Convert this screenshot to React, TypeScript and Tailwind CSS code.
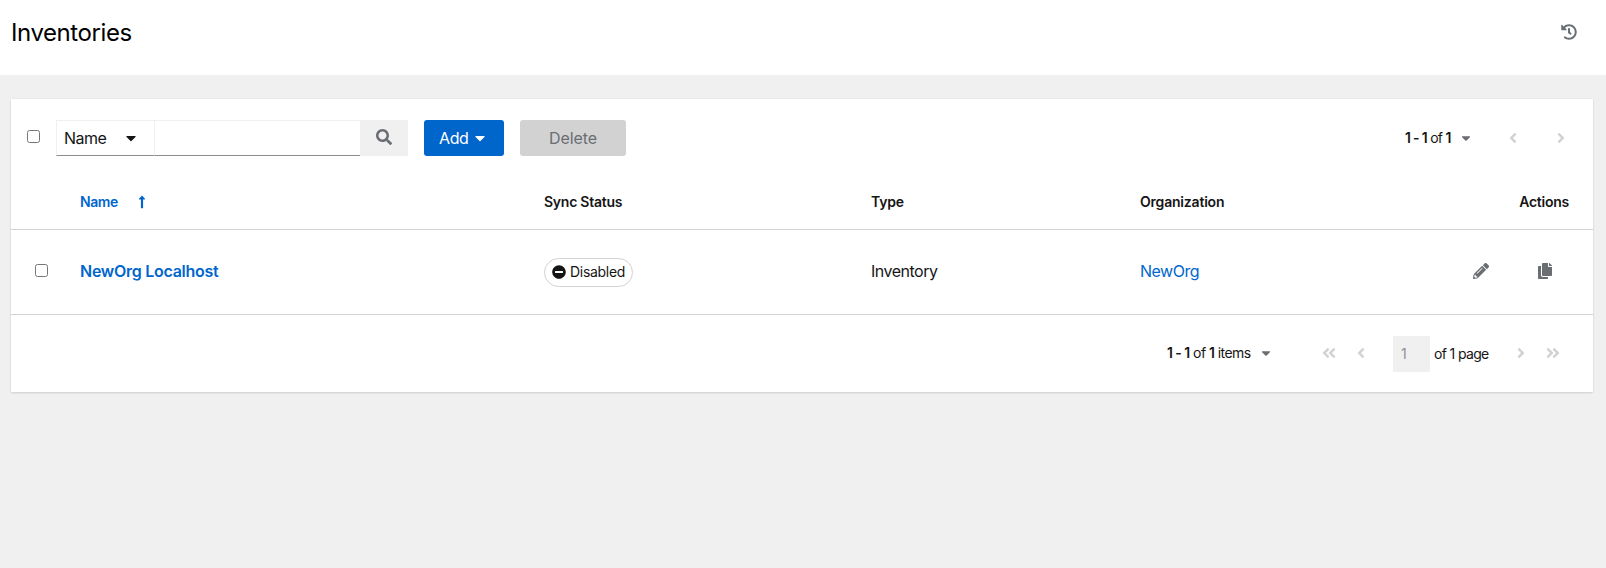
import type { ReactNode } from "react";
import {
  FaAngleDoubleLeft,
  FaAngleDoubleRight,
  FaAngleLeft,
  FaAngleRight,
  FaCaretDown,
  FaCopy,
  FaHistory,
  FaLongArrowAltUp,
  FaMinusCircle,
  FaPencilAlt,
  FaSearch,
} from "react-icons/fa";

function Checkbox({ label }: { label: string }) {
  return (
    <input
      type="checkbox"
      aria-label={label}
      className="block size-[13px] shrink-0 appearance-none rounded-[2.5px] border border-[#767676] bg-white"
    />
  );
}

function IconButton({ label, className, children }: { label: string; className: string; children: ReactNode }) {
  return (
    <button type="button" aria-label={label} className={`flex shrink-0 items-center justify-center ${className}`}>
      {children}
    </button>
  );
}

function Toolbar() {
  return (
    <div className="flex h-[77px] items-center pt-[1px] pl-4">
      <div className="-mt-[3px] w-[29px]">
        <Checkbox label="Select all" />
      </div>
      <div className="flex h-9">
        <button
          type="button"
          className="flex w-[99px] items-center border border-[#f0f0f0] border-b-[#8a8d90] pl-[7px] text-base tracking-[-0.5px]"
        >
          <span className="w-[59px] pb-px text-left">Name</span>
          <FaCaretDown size={16} />
        </button>
        <input
          type="text"
          aria-label="Search text input"
          className="w-[205px] border-t border-b border-[#f0f0f0] border-b-[#8a8d90] bg-white"
        />
        <IconButton label="Search" className="w-12 bg-[#f0f0f0] text-[#6a6e73]">
          <FaSearch size={16} className="-mt-[2px]" />
        </IconButton>
      </div>
      <button
        type="button"
        className="ml-4 flex h-9 w-20 items-center rounded-[3px] bg-[#0066cc] pl-[15px] text-base tracking-[-0.4px] text-white"
      >
        <span className="w-[33px] pb-px text-left">Add</span>
        <FaCaretDown size={16} />
      </button>
      <button
        type="button"
        disabled
        className="ml-4 h-9 w-[106px] rounded-[3px] bg-[#d2d2d2] pb-px text-base tracking-[-0.1px] text-[#6a6e73]"
      >
        Delete
      </button>
      <div className="ml-auto flex items-center pr-[17px] text-sm">
        <span className="w-[54px] whitespace-nowrap pb-px tracking-[-0.7px]">
          <b className="font-semibold">1 - 1</b> of <b className="font-semibold">1</b>
        </span>
        <FaCaretDown size={14} className="-mt-px text-[#6a6e73]" />
        <IconButton label="Previous page" className="ml-[25px] w-[30px] pb-px text-[#d2d2d2]">
          <FaAngleLeft size={16} />
        </IconButton>
        <IconButton label="Next page" className="ml-[18px] w-[30px] pb-px text-[#d2d2d2]">
          <FaAngleRight size={16} />
        </IconButton>
      </div>
    </div>
  );
}

function InventoryTable() {
  return (
    <table className="w-full table-fixed border-collapse text-left">
      <colgroup>
        <col className="w-[69px]" />
        <col className="w-[464px]" />
        <col className="w-[327px]" />
        <col className="w-[269px]" />
        <col className="w-[280px]" />
        <col />
      </colgroup>
      <thead>
        <tr className="h-[53px] border-b border-[#d2d2d2] text-sm">
          <th />
          <th className="font-semibold text-[#0066cc]">
            <span className="flex items-center pb-px">
              <span className="w-[55px] tracking-[-0.4px]">Name</span>
              <FaLongArrowAltUp size={14} />
            </span>
          </th>
          <th className="pb-px font-semibold tracking-[-0.25px]">Sync Status</th>
          <th className="pb-px font-semibold tracking-[-0.2px]">Type</th>
          <th className="pb-px font-semibold tracking-[-0.2px]">Organization</th>
          <th className="pr-6 pb-px text-right font-semibold tracking-[-0.25px]">Actions</th>
        </tr>
      </thead>
      <tbody>
        <tr className="h-[85px] border-b border-[#d2d2d2] text-base">
          <td className="pb-[2px] pl-6">
            <Checkbox label="Select row" />
          </td>
          <td className="pb-[2px] font-semibold tracking-[-0.27px] text-[#0066cc]">
            <a href="#inventory">NewOrg Localhost</a>
          </td>
          <td className="pt-px">
            <span className="flex h-[29px] w-[89px] items-center rounded-full border border-[#d2d2d2] pl-[7px] text-sm tracking-[-0.3px]">
              <FaMinusCircle size={14} className="mr-1 shrink-0" />
              <span className="pb-px">Disabled</span>
            </span>
          </td>
          <td className="pb-[2px] tracking-[-0.5px]">Inventory</td>
          <td className="pb-[2px] tracking-[-0.5px] text-[#0066cc]">
            <a href="#organization">NewOrg</a>
          </td>
          <td>
            <div className="flex justify-end pr-6 pb-px text-[#6a6e73]">
              <IconButton label="Edit" className="w-[48px]">
                <FaPencilAlt size={16} />
              </IconButton>
              <IconButton label="Copy" className="ml-4 w-[48px]">
                <FaCopy size={16} />
              </IconButton>
            </div>
          </td>
        </tr>
      </tbody>
    </table>
  );
}

function Pagination() {
  return (
    <div className="flex h-[77px] items-center justify-end pr-6 text-sm">
      <span className="w-[92px] whitespace-nowrap tracking-[-0.55px]">
        <b className="font-semibold">1 - 1</b> of <b className="font-semibold">1</b> items
      </span>
      <FaCaretDown size={14} className="text-[#6a6e73]" />
      <div className="ml-[40px] flex items-center text-[#d2d2d2]">
        <IconButton label="First page" className="w-8">
          <FaAngleDoubleLeft size={16} />
        </IconButton>
        <IconButton label="Previous page" className="w-8">
          <FaAngleLeft size={16} />
        </IconButton>
      </div>
      <input
        type="text"
        aria-label="Current page"
        disabled
        defaultValue="1"
        className="mt-px ml-4 h-9 w-[37px] bg-[#f0f0f0] pl-2 text-sm text-[#8f9193]"
      />
      <span className="ml-1 w-[71px] whitespace-nowrap pt-[2px] tracking-[-0.65px]">of 1 page</span>
      <div className="flex items-center text-[#d2d2d2]">
        <IconButton label="Next page" className="w-8">
          <FaAngleRight size={16} />
        </IconButton>
        <IconButton label="Last page" className="w-8">
          <FaAngleDoubleRight size={16} />
        </IconButton>
      </div>
    </div>
  );
}

export default function App() {
  return (
    <div className="min-h-[568px] bg-[#f0f0f0] font-['Inter',sans-serif] text-[#151515]">
      <header className="flex h-[75px] items-start justify-between bg-white pr-[29px] pl-[11px]">
        <h1 className="pt-[17px] text-2xl leading-8 tracking-[-0.42px] text-black">Inventories</h1>
        <button type="button" aria-label="View activity stream" className="mt-6 text-[#6a6e73]">
          <FaHistory size={16} />
        </button>
      </header>
      <main className="pt-6 pr-[13px] pl-[11px]">
        <section className="bg-white shadow-[0_1px_2px_0_rgba(3,3,3,0.12),0_0_2px_0_rgba(3,3,3,0.06)]">
          <Toolbar />
          <InventoryTable />
          <Pagination />
        </section>
      </main>
    </div>
  );
}
